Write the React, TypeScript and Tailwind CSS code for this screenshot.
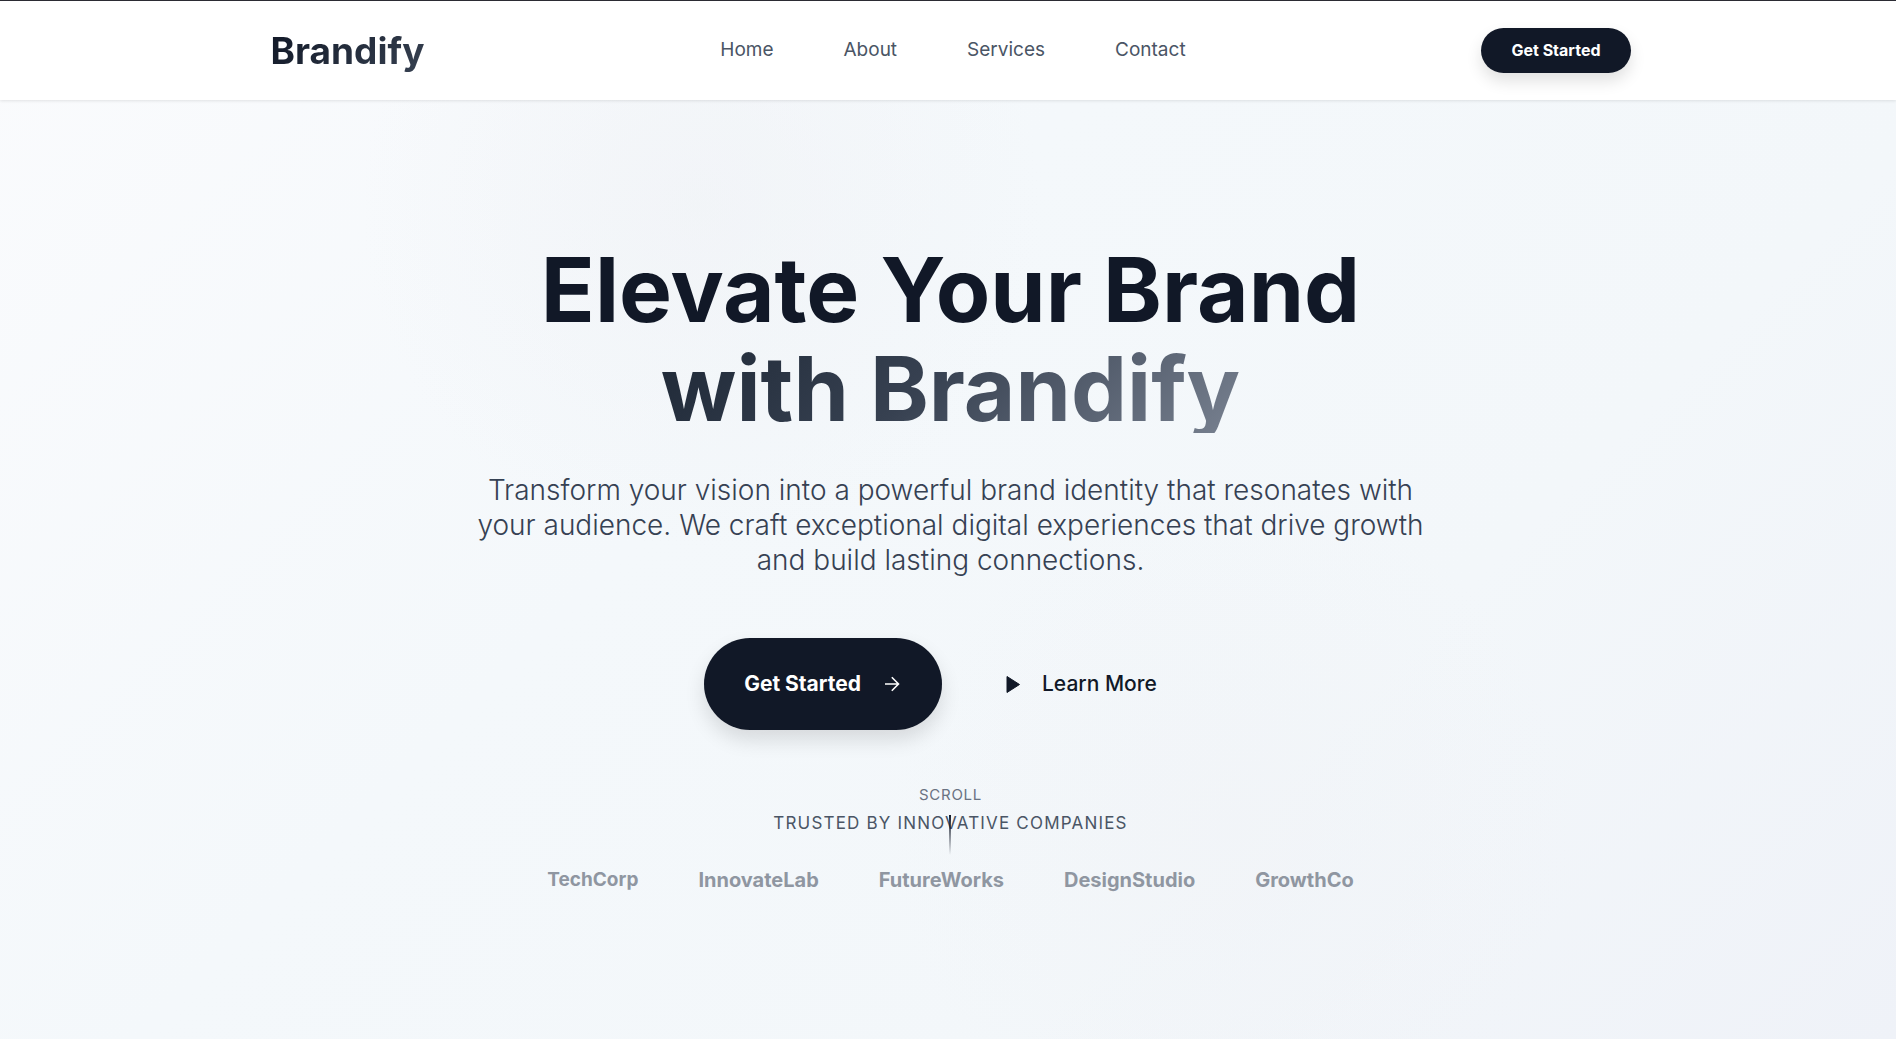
const navLinks = ["Home", "About", "Services", "Contact"];
const companies = ["InnovateLab", "FutureWorks", "DesignStudio", "GrowthCo"];

function Header() {
  return (
    <header className="border-t border-t-[#2b2b33] bg-white pl-[5px] shadow-[0_1px_3px_rgba(0,0,0,0.1)]">
      <div className="mx-auto flex h-[99px] max-w-[1360px] items-center justify-between">
        <a
          href="#home"
          className="bg-linear-[135deg,#111827,#374151] bg-clip-text text-[37px] leading-[44px] font-bold text-transparent"
        >
          Brandify
        </a>
        <nav className="flex gap-[70px] pb-0.5 text-[19px] leading-7 text-gray-600">
          {navLinks.map((label) => (
            <a key={label} href={`#${label.toLowerCase()}`}>
              {label}
            </a>
          ))}
        </nav>
        <button
          type="button"
          className="h-[45px] rounded-full bg-[#111827] px-[30px] pb-0.5 text-base font-bold text-white shadow-[0_8px_16px_rgba(0,0,0,0.12)]"
        >
          Get Started
        </button>
      </div>
    </header>
  );
}

function Hero() {
  return (
    <main className="flex flex-1 flex-col items-center pt-[145px] pl-[5px] text-center">
      <h1 className="text-[89px] leading-none font-bold text-[#111827]">
        Elevate Your Brand
        <span className="mt-2.5 block">
          <span className="inline-block bg-linear-[135deg,#1f2937,#374151_45%,#788190] bg-clip-text text-transparent">
            with Brandify
          </span>
        </span>
      </h1>
      <p className="mt-10 max-w-[960px] text-[28px] leading-[35px] font-light text-gray-700">
        Transform your vision into a powerful brand identity that resonates with your audience. We craft exceptional
        digital experiences that drive growth and build lasting connections.
      </p>
      <div className="mt-[60px] flex items-center gap-6">
        <button
          type="button"
          className="flex h-[92px] items-center gap-[21px] rounded-full bg-[#111827] px-10 text-[21px] font-bold text-white shadow-[0_10px_20px_rgba(0,0,0,0.12)]"
        >
          Get Started
          <svg viewBox="0 0 20 20" className="size-5" fill="none" stroke="currentColor" strokeWidth="1.6">
            <path d="M3 10h13.5M9.8 3.3 16.5 10 9.8 16.7" />
          </svg>
        </button>
        <button type="button" className="flex h-[92px] items-center gap-[22px] px-10 text-[21px] font-medium text-[#111827]">
          <svg viewBox="0 0 14 17" className="h-[17px] w-[14px]" fill="currentColor">
            <path d="M1 0.5 13.5 8.5 1 16.5z" stroke="currentColor" strokeLinejoin="round" />
          </svg>
          Learn More
        </button>
      </div>
      <section className="relative mt-[81px] flex flex-col items-center">
        <h2 className="text-[17px] leading-6 tracking-[0.07em] text-gray-600 uppercase">
          Trusted by innovative companies
        </h2>
        <a
          href="#more"
          className="absolute -top-[26px] flex flex-col items-center gap-2.5 text-[15px] leading-5 tracking-wider text-gray-500"
        >
          SCROLL
          <span className="h-10 w-0.5 bg-linear-to-b from-[#111827] to-transparent" />
        </a>
        <ul className="mt-[31px] flex items-center gap-[60px] text-xl leading-7 font-bold text-[#8f96a1]">
          <li className="text-[19px] leading-7">TechCorp</li>
          {companies.map((name) => (
            <li key={name}>{name}</li>
          ))}
        </ul>
      </section>
    </main>
  );
}

export default function App() {
  return (
    <div className="flex min-h-screen flex-col bg-[radial-gradient(circle_at_37%_20%,rgba(238,240,244,0.5),transparent_340px),radial-gradient(circle_at_65%_80%,rgba(240,242,246,0.5),transparent_340px),linear-gradient(135deg,#fafbfd,#f4f8fb_40%,#f3f7fa_70%,#eff2f8)] font-['Inter',sans-serif]">
      <Header />
      <Hero />
    </div>
  );
}
